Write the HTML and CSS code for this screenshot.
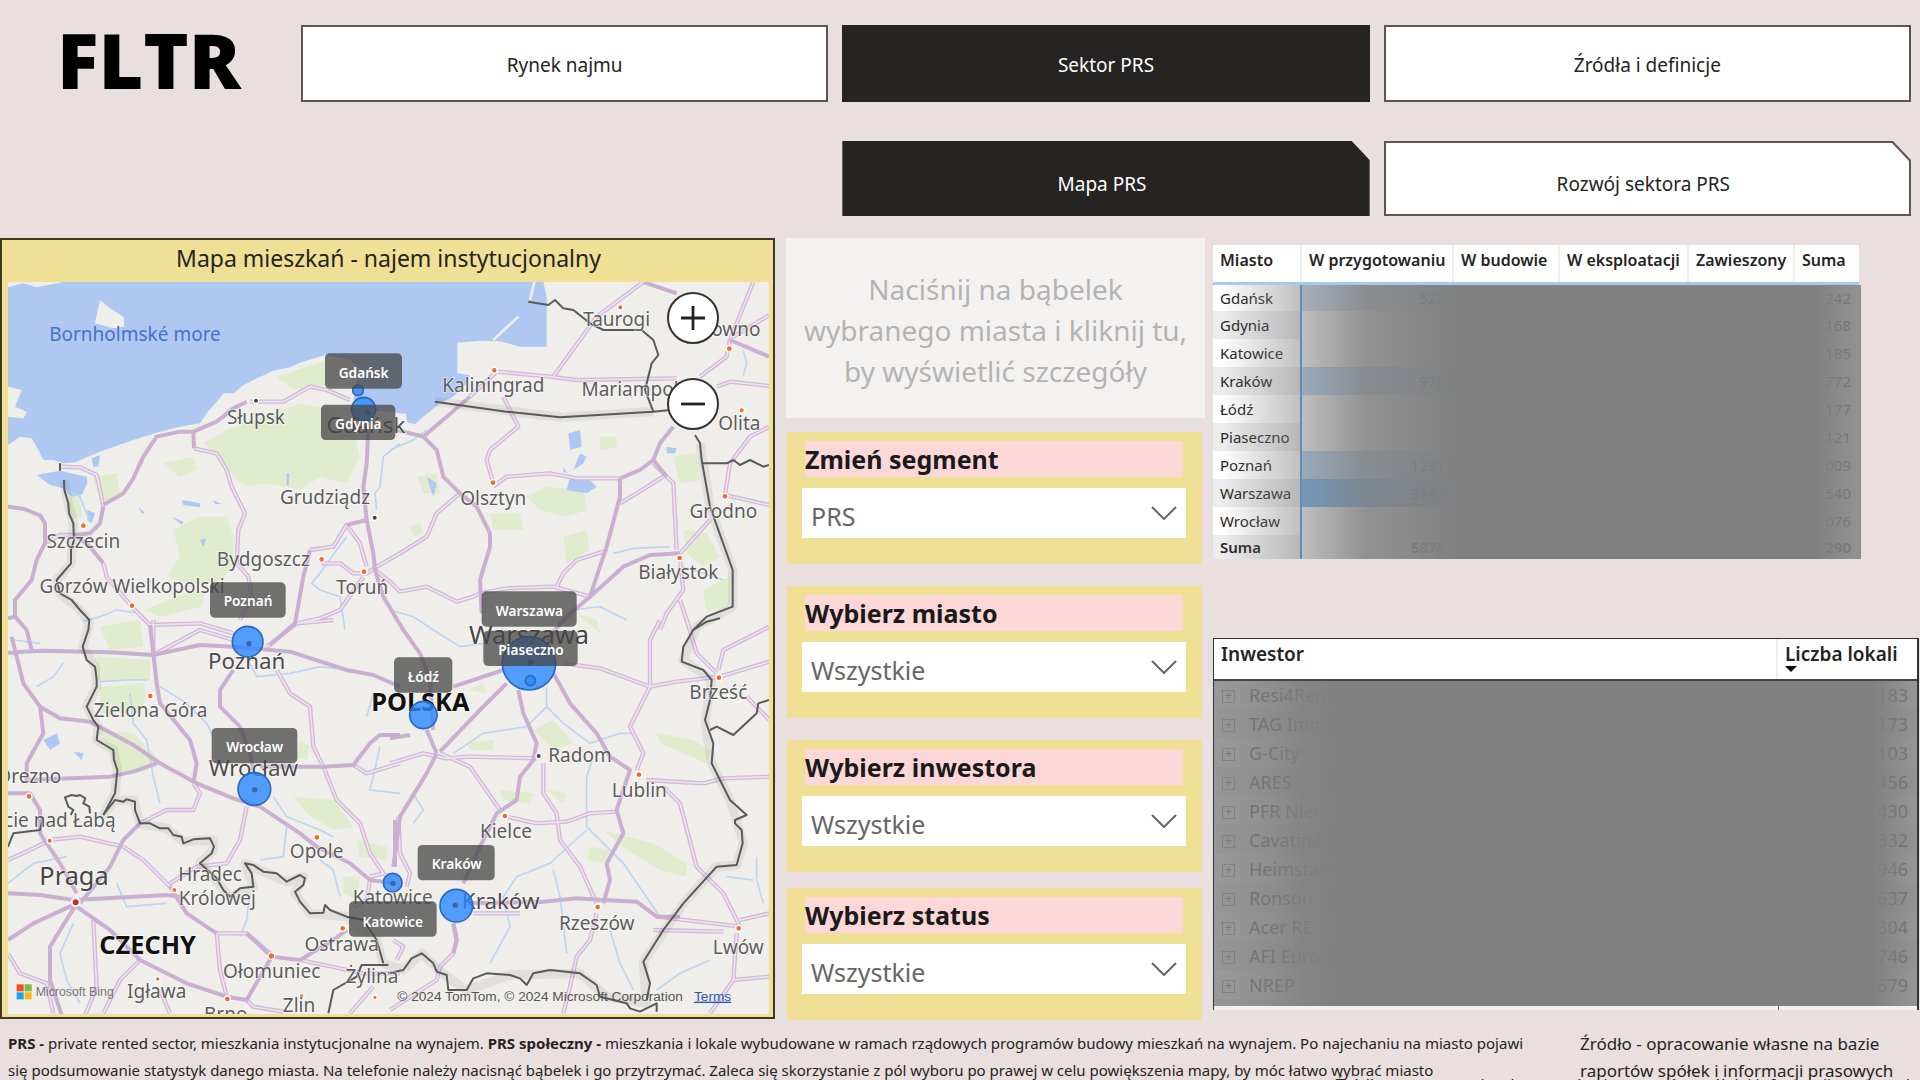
FILE: index.html
```html
<!DOCTYPE html>
<html lang="pl">

<head>
  <meta charset="utf-8">
  <title>FLTR - Mapa PRS</title>
  <link rel="stylesheet" href="styles.css">
</head>

<body>

<header class="top">
  <div class="logo">FLTR</div>
  <nav class="tabs">
    <button class="tab">Rynek najmu</button>
    <button class="tab active">Sektor PRS</button>
    <button class="tab">Źródła i definicje</button>
    <button class="tab subtab first active">Mapa PRS</button>
    <button class="tab subtab">Rozwój sektora PRS</button>
  </nav>
</header>

<main class="report">

<section class="map-panel">
  <h1>Mapa mieszkań - najem instytucjonalny</h1>
  <div class="map">
  <svg viewBox="24 156 2283 2196" role="img" aria-label="Mapa Polski">
    <defs>
      <g id="minor">
        <path d="M180 710L240 712 290 735 300 780 310 830M582 655L650 670 680 720 695 770 735 850 715 900 710 1000 745 1040 755 1100 720 1170M225 915L180 915 135 940M310 1000L320 1040 370 1100 400 1135 450 1185 600 1180 700 1210M930 960L1000 950 1040 885 1080 940 1100 1010M965 1000L1020 1000 1060 1030 1100 1030 1130 1010 1200 970 1280 920 1310 850 1380 790M1125 1020L1170 1055 1200 1085 1280 1070 1370 1115 1420 1100 1440 1090 1520 1075 1660 1070 1770 1100M1090 1040L1020 1140 960 1165 890 1180M750 515L850 515 930 470 980 480 1050 510"/>
        <g transform="translate(1170 0)">
          <path d="M320 425L480 440 560 450 860 445M490 440L620 260 760 156M1090 156L1020 330 1010 380 930 440M1030 320L1138 255M980 470L1020 455 1138 468M340 500L385 590 300 660 290 690 310 760M310 770L350 740 480 730 560 745 690 745M790 700L850 760 860 960M690 820L740 790 820 740M870 970L960 870M1138 825L1005 795 1020 700 1080 620 1138 590M870 990L880 1080 830 1150 810 1200M870 1110L900 1200M640 965L560 990 520 1030 500 1070M240 500L320 425"/>
        </g>
        <g transform="translate(0 1170)">
          <path d="M740 560L720 660 680 730 590 740 510 790M830 150L870 220 930 260 940 380 970 440 1010 540 1080 610 1110 700 1150 760M1060 435L1100 460 1200 430M800 80L890 10 1000 0M460 105L600 30 700 60M460 105V0M420 610L500 570 580 570 600 520 580 490M370 680L430 720 510 800M650 940L740 940 815 1005M650 940L660 1050 680 1130M740 1140L760 1160 850 1175M900 1020L1090 1060 1200 1060M1120 1100L1050 1180M420 1020L360 1080 310 1180M24 1000L60 1060 140 1090 160 1180M280 900L290 1100 250 1200M480 1110L510 1180M24 720L90 690 150 660 240 650 370 680M1110 780L1100 840 1060 860M1110 770L1150 760 1200 800"/>
        </g>
        <g transform="translate(1170 1170)">
          <path d="M520 130L630 145 780 200 860 185 990 170 1138 125M810 0L780 60 780 200 720 320 760 400 740 450M0 430L100 400 170 415 240 410 440 415M150 400L240 440 330 570M460 430V520L500 580 510 660 570 740 620 850M350 590L440 610 530 605 600 580 680 575M770 480L940 490 1000 475 1138 470M820 500L870 550 920 740 1000 820 1050 920M800 890L1050 920M790 930L1000 935M1050 900L1138 880M1040 940L1030 1080 960 1180M1030 1080L1138 1070M620 880L600 960 560 1010 540 1100 520 1180M190 910L200 960 190 1000 150 1040 140 1080 0 1170M25 590L30 700 60 760 50 800M890 0L920 100 980 160M985 150L1000 90 1138 20M250 880H390M10 960L40 980 20 1020M1070 230L1138 300"/>
        </g>
      </g>
    </defs>

    <rect class="land" x="24" y="156" width="2283" height="2196"/>

    <g class="forest">
      <path d="M610 640L680 600 760 570 900 520 1000 540 1060 600 1080 680 1040 760 960 740 900 780 800 760 740 770 700 740 660 680Z"/>
      <path d="M830 440L980 390 1050 390 1060 440 960 470 880 480Z"/>
      <path d="M490 700L580 680 590 720 540 740ZM280 740L350 730 360 790 310 820 290 780ZM200 800L240 800 245 860 215 870Z"/>
      <path d="M520 900L600 860 680 860 700 920 700 1000 660 1060 560 1060 500 1040 540 980ZM430 1140L560 1090 620 1080 600 1130 480 1160ZM300 1190L420 1170 430 1250 330 1260Z"/>
      <path d="M290 1280L450 1290 450 1350 290 1350ZM300 1370L430 1360 440 1400 420 1450 300 1450ZM300 1500L400 1510 480 1590 440 1620 360 1640Z"/>
      <path d="M880 1700L1000 1710 1060 1790 1000 1800 920 1750ZM1070 1830L1160 1850 1160 1890 1080 1880ZM1030 1940L1080 1940 1070 2010 1030 1990ZM900 1530L930 1550 920 1590 890 1580Z"/>
      <path d="M1580 800L1640 770 1750 780 1760 840 1700 860 1620 840ZM1470 850L1560 850 1570 900 1480 900ZM1690 920L1760 900 1770 960 1700 1000ZM1250 740L1310 730 1320 790 1270 790ZM1230 890L1260 880 1270 910 1240 920ZM1800 620L1850 620 1850 650 1800 660Z"/>
      <path d="M2020 680L2090 670 2100 750 2040 760ZM2050 900L2120 910 2160 980 2110 1010 2060 970ZM2110 1080L2190 1040 2190 1120 2120 1150Z"/>
      <path d="M1600 1500L1660 1470 1720 1540 1660 1560ZM1410 1380L1450 1360 1460 1390ZM1400 1540L1480 1530 1480 1560 1410 1560ZM1500 1680L1600 1690 1590 1720 1510 1710ZM1640 1680L1700 1690 1690 1720ZM1970 1510L2080 1530 2130 1560 2120 1600 2050 1570 1980 1540ZM1810 1800L1880 1820 1960 1840 2060 1900 2060 1940 1980 1920 1880 1860ZM1770 1850L1830 1860 1810 1900 1760 1890ZM1730 1150L1790 1170 1800 1210Z"/>
    </g>

    <g class="water">
      <path d="M24 172L70 160 110 172 190 156H1640V350L1560 350 1500 334 1440 332 1372 338 1372 430 1410 436 1400 460 1360 500 1320 520 1270 560 1245 582 1222 578 1218 552 1160 545 1100 540 1060 510 1070 450 1090 430 1050 390 975 375 900 398 870 412 820 422 760 450 730 466 700 490 672 490 650 515 620 550 600 580 540 590 480 605 400 630 300 665 225 697 190 700 160 690 130 690 110 650 95 625 60 620 24 645V560L70 565 80 545 45 530 65 480 24 470Z"/>
      <path d="M110 735L180 722 260 740 262 760 245 795 215 800 190 775 150 765ZM262 840L285 850 275 880 262 870ZM275 685L300 675 295 710 280 710Z"/>
      <path d="M545 810L600 820 600 832 550 825ZM515 860L550 875 545 885ZM640 810L665 822 645 822ZM415 830L435 850 425 850ZM860 730L868 730 866 768 860 765ZM600 930L620 925 610 950Z"/>
      <path d="M1705 610L1740 600 1745 650 1710 660ZM1740 670L1760 680 1750 700 1720 720ZM1710 740L1760 740 1790 770 1760 790 1700 780ZM1690 710L1702 730 1690 725ZM1280 740L1310 760 1300 800 1290 770ZM2000 650L2030 655 2025 670 2000 670ZM130 1530L170 1510 180 1540 150 1560ZM220 1565L250 1570 245 1590Z"/>
    </g>
    <path class="land" d="M300 210L285 280 340 295 372 290V262L330 235ZM1630 156L1640 200 1660 215 1680 156Z"/>
    <path class="spit" d="M1603 156L1590 210M1555 260L1480 330"/>

    <g class="river">
      <path d="M200 780L240 800 255 840 270 870M1200 640L1150 680 1140 770 1125 790 1130 840M1040 920L1010 960 960 1030 935 1060 960 1080 1020 1100 1035 1200M1170 660L1240 630 1280 600M250 1175L300 1160 350 1140 420 1150M300 1355L380 1350 440 1350M390 1390L400 1480 440 1530 460 1640 480 1720M480 1370L560 1420 620 1480 640 1520"/>
      <path d="M750 1300L770 1340 870 1330 960 1310 1050 1320M820 1700L860 1760 960 1800 1000 1820M860 1790L850 1880 780 1890M960 1890L1000 1920 1020 2000M24 1960L100 1900 200 1880M350 1960L380 2030 500 2020M220 2080L180 2170 200 2250 240 2320M750 1990L740 2070 720 2120M1120 1390L1100 1460M1140 1550L1110 1680 1200 1690"/>
      <path d="M1170 1140L1240 1160 1300 1200 1380 1250 1450 1240M1640 1370L1640 1430 1690 1480 1770 1540 1860 1510 1900 1510M1640 1430L1580 1490 1450 1510 1360 1570M1780 1580L1760 1640 1760 1790 1870 1900 1980 2060M1760 1800L1650 1900 1550 1940 1510 2000 1530 2090 1470 2200M1660 1920L1680 2000 1700 2170M1830 2100L1860 2200 1900 2280M1970 2280L2040 2230 2130 2190M2270 1880V1950L2290 2020M2180 1940L2260 1950M1840 970L1900 955 2010 950M2050 1010L2170 1050M2230 360L2240 400 2230 440M1720 1140L1800 1130 1880 1170M110 1370L160 1340 190 1300M1240 1690L1270 1740 1240 1780M40 1230L120 1240"/>
    </g>

    <g class="road-case"><use href="#minor"/></g>
    <g class="road-fill"><use href="#minor"/></g>

    <g class="road-major">
      <path d="M24 830L70 836 120 856 135 880V940L110 990 95 1050 45 1110V1160L24 1165M45 1160L80 1200 95 1260M310 825L370 790 400 745 430 680 470 620 540 605 580 605 650 575 700 535 740 515M580 605L582 655M310 830L300 880 270 910 225 915 270 950 310 1000M450 1185L460 1270 470 1360 480 1420 570 1530 590 1600 580 1660M1105 600L1100 700 1090 770 1100 870 1120 970 1125 1020 1150 1100 1210 1200 1260 1270 1290 1350 1300 1500M1100 870L1040 885M930 960L910 1040 885 1180 810 1245"/>
      <path d="M1190 600L1270 620 1310 660 1330 740 1380 790 1430 830 1470 910 1470 950 1440 1050 1445 1150M1270 620L1410 500M1860 745L1920 720 1960 690 1980 640 2020 590M1860 745L1860 800 1820 950 1770 1100 1700 1160 1640 1230M1770 1100L1870 1010 1950 975 2040 970M1930 156L2030 190M2190 330L2307 380M1960 690L2000 740"/>
      <g transform="translate(0 1170)">
        <path d="M24 98L120 92 330 97 460 105 600 75 700 80 870 95 1040 150 1120 165 1200 200M35 50L70 190 120 260 180 295 270 305 400 375 480 430 590 490 700 535 780 560 900 640 950 680 1050 730 1110 780 1180 790M120 260L130 340 80 430V480L330 470 400 455 470 430M24 520L90 520 120 570V640L180 730 230 820M24 960L100 910 230 850M24 820L120 825 220 840 500 825 540 830M230 850L150 980V1080L190 1200M230 860L330 930 420 1020 560 1090 680 1130 740 1140 815 1010 740 940M240 850L330 740 370 660 420 610M510 800L560 880 650 940M900 1020L1000 960 1040 930M815 1010L900 1020M700 150L660 210V260L720 320 750 400 760 450M780 440H970L1060 435 1110 370 1140 345 1200 345M1185 600V740"/>
      </g>
      <g transform="translate(1170 1170)">
        <path d="M190 200L340 150M150 395L270 270 350 190M140 400L110 460 30 590 10 740M110 330L140 400M0 355L60 345M385 210L400 280 440 370 430 420 390 470 380 540 320 580 270 680 220 790M490 160L540 250 620 340 660 410 720 450 680 570 700 640 650 730 660 780 640 850M240 850L460 845 560 835 640 840 740 845 800 890 870 890M190 910L200 960 190 1000"/>
      </g>
    </g>

    <g id="borders">
      <path class="halo" d="M192 750L205 820 220 880 213 1000 170 1050 180 1090 240 1140 268 1180 248 1250 285 1310 290 1370 260 1430 295 1490 290 1530 340 1560 352 1620 345 1690 310 1755 345 1710 400 1710 420 1780 500 1795 550 1835 640 1830 640 1860 600 1900 690 2000 760 1970 735 1900 860 1955 910 1940 885 1990 930 2050 1040 2060 1130 2130 1150 2200 1210 2220 1265 2170 1340 2240 1400 2280 1530 2235 1740 2230 1820 2300 1940 2320 1930 2195 2050 2020 2150 1910 2210 1905 2230 1840 2190 1710 2135 1600 2115 1470 2135 1350 2050 1290 2090 1190 2198 1130V1020L2130 830 2100 640M1305 515L1680 562 1960 545"/>
      <path class="border" d="M180 700V722M192 750L193 780 205 820 207 850 220 880 222 930 213 960 213 1000 170 1050 180 1090 215 1110 240 1140 268 1170 265 1200 248 1250 260 1290 285 1310 290 1350 290 1370 260 1430 280 1470 295 1490 290 1530 340 1560 342 1590 352 1620 345 1690 310 1755"/>
      <path class="border" d="M24 1850L40 1810 120 1800 130 1760M270 1750L268 1730 250 1720 256 1705 240 1695 230 1698 215 1695 195 1702 205 1730 220 1740 212 1755M310 1755L345 1710 370 1715 380 1708 405 1715 405 1740 420 1780 450 1780 480 1795 505 1795 520 1815 545 1820 550 1840 580 1828 630 1825 642 1850 635 1870 600 1900 650 1945 670 1980 690 2000 720 1975 760 1970 755 1930 735 1900 760 1905 790 1925 830 1930 860 1955 900 1935 915 1945 910 1965 885 1985 900 2015 930 2050 970 2048 975 2025 990 2040 1040 2060 1090 2070 1110 2100 1130 2130 1150 2200M985 2350L1000 2280 1070 2240 1085 2205 1165 2205"/>
      <path class="border" d="M1165 2230L1210 2220 1235 2185 1265 2170 1300 2200 1310 2225 1340 2235 1345 2280 1400 2280 1420 2245 1460 2230 1530 2235 1560 2245 1580 2265 1600 2230 1650 2220 1740 2230 1790 2265 1800 2300 1880 2320 1890 2335 1920 2345 1970 2320 1970 2345M1940 2310L1950 2260 1930 2195 1990 2100 2050 2020 2150 1910 2210 1905 2228 1840 2225 1800 2205 1780 2205 1770 2240 1755 2190 1710 2175 1680 2135 1600 2140 1540 2115 1470 2130 1410 2135 1350 2110 1320 2045 1295 2050 1250 2080 1200 2120 1175 2160 1165"/>
      <path class="border" d="M2080 1200L2120 1160 2198 1130V1020L2130 830 2105 690 2100 640 2085 615M2105 700L2180 700 2200 690 2220 705 2250 690 2290 710 2307 705M1305 515L1520 545 1680 562 1960 545 2010 540M1960 545L1935 480 1955 400 1975 375 1960 330 1925 300 1810 300 1770 280 1720 240 1690 235 1665 210 1645 225 1585 215M2130 1500L2150 1490 2200 1515 2270 1450 2275 1420 2307 1410"/>
    </g>

    <g class="dots">
      <circle cx="250" cy="887" r="9"/><circle cx="396" cy="1127" r="9"/><circle cx="965" cy="988" r="9"/><circle cx="1092" cy="1025" r="9"/>
      <circle cx="1861" cy="232" r="8"/><circle cx="1483" cy="421" r="9"/><circle cx="2188" cy="356" r="9"/><circle cx="2225" cy="541" r="8"/>
      <circle cx="1479" cy="758" r="9"/><circle cx="2175" cy="799" r="9"/><circle cx="2039" cy="984" r="9"/>
      <circle cx="451" cy="1398" r="9"/><circle cx="87" cy="1699" r="9"/><circle cx="149" cy="1832" r="8"/><circle cx="523" cy="1980" r="8"/>
      <circle cx="951" cy="1822" r="9"/><circle cx="814" cy="2178" r="10"/><circle cx="1028" cy="2095" r="9"/><circle cx="473" cy="2247" r="7"/>
      <circle cx="682" cy="2307" r="9"/><circle cx="905" cy="2298" r="7"/><circle cx="1125" cy="2302" r="7"/>
      <circle cx="2157" cy="1343" r="9"/><circle cx="1917" cy="1634" r="9"/><circle cx="1515" cy="1758" r="9"/><circle cx="1793" cy="2031" r="9"/><circle cx="2216" cy="2095" r="9"/>
      <circle class="capital" cx="227" cy="2017" r="12"/>
      <circle class="small" cx="768" cy="512" r="8"/><circle class="small" cx="1124" cy="863" r="8"/><circle class="small" cx="1616" cy="1578" r="8"/>
    </g>

    <g class="city">
      <text class="sea" x="405" y="332">Bornholmské more</text>
      <text x="768" y="583">Słupsk</text>
      <text x="1098" y="608" class="big">Gdańsk</text>
      <text x="975" y="823">Grudziądz</text>
      <text x="250" y="955">Szczecin</text>
      <text x="790" y="1007">Bydgoszcz</text>
      <text x="396" y="1088">Gorzów Wielkopolski</text>
      <text x="1087" y="1092">Toruń</text>
      <text x="1850" y="287">Taurogi</text>
      <text x="2190" y="318">Kowno</text>
      <text x="1480" y="485">Kaliningrad</text>
      <text x="1890" y="498">Mariampol</text>
      <text x="2218" y="600">Olita</text>
      <text x="1480" y="825">Olsztyn</text>
      <text x="2170" y="865">Grodno</text>
      <text x="2035" y="1047">Białystok</text>
      <text x="740" y="1316" class="big">Poznań</text>
      <text x="452" y="1461">Zielona Góra</text>
      <text x="760" y="1638" class="big">Wrocław</text>
      <text x="88" y="1660">Drezno</text>
      <text x="145" y="1790">Uście nad Łabą</text>
      <text x="222" y="1964" class="metro">Praga</text>
      <text x="950" y="1883">Opole</text>
      <text x="630" y="1954">Hradec</text>
      <text x="652" y="2024">Królowej</text>
      <text x="1178" y="2023">Katowice</text>
      <text x="1025" y="2163">Ostrawa</text>
      <text x="815" y="2245">Ołomuniec</text>
      <text x="1116" y="2258">Żylina</text>
      <text x="470" y="2305">Igława</text>
      <text x="897" y="2347">Zlin</text>
      <text x="677" y="2372">Brno</text>
      <text x="1587" y="1242" class="metro">Warszawa</text>
      <text x="1740" y="1597">Radom</text>
      <text x="2155" y="1407">Brześć</text>
      <text x="1918" y="1700">Lublin</text>
      <text x="1518" y="1823">Kielce</text>
      <text x="1502" y="2036" class="big">Kraków</text>
      <text x="1790" y="2100">Rzeszów</text>
      <text x="2215" y="2172">Lwów</text>
      <text x="443" y="2172" class="country">CZECHY</text>
      <text x="1261" y="1442" class="country">POLSKA</text>
    </g>

    <g class="bubbles">
      <circle cx="1074" cy="481" r="16"/>
      <circle cx="1091" cy="538" r="36"/>
      <circle cx="743" cy="1235" r="46"/>
      <circle cx="1587" cy="1300" r="80"/>
      <circle cx="1591" cy="1352" r="15"/>
      <circle cx="1270" cy="1455" r="41"/>
      <circle cx="763" cy="1677" r="49"/>
      <circle cx="1178" cy="1958" r="28"/>
      <circle cx="1369" cy="2027" r="49"/>
    </g>
    <g class="bubble-dots">
      <circle cx="1103" cy="548" r="8"/><circle cx="747" cy="1241" r="8"/><circle cx="1592" cy="1298" r="9"/>
      <circle cx="764" cy="1679" r="8"/><circle cx="1179" cy="1960" r="8"/><circle cx="1366" cy="2026" r="8"/>
    </g>

    <g class="tags">
      <rect x="975" y="370" width="231" height="106" rx="14"/><text x="1091" y="443">Gdańsk</text>
      <rect x="963" y="524" width="223" height="106" rx="14"/><text x="1075" y="596">Gdynia</text>
      <rect x="630" y="1057" width="227" height="106" rx="14"/><text x="744" y="1129">Poznań</text>
      <rect x="1445" y="1084" width="285" height="106" rx="14"/><text x="1588" y="1157">Warszawa</text>
      <rect x="1450" y="1202" width="283" height="106" rx="14"/><text x="1593" y="1274">Piaseczno</text>
      <rect x="1182" y="1282" width="175" height="106" rx="14"/><text x="1270" y="1355">Łódź</text>
      <rect x="635" y="1494" width="257" height="106" rx="14"/><text x="764" y="1567">Wrocław</text>
      <rect x="1253" y="1845" width="231" height="106" rx="14"/><text x="1370" y="1918">Kraków</text>
      <rect x="1047" y="2014" width="263" height="106" rx="14"/><text x="1178" y="2090">Katowice</text>
    </g>

    <g class="credits">
      <rect x="50" y="2263" width="21" height="21" fill="#f05023"/>
      <rect x="74" y="2263" width="21" height="21" fill="#7fba42"/>
      <rect x="50" y="2287" width="21" height="21" fill="#1ba4e8"/>
      <rect x="74" y="2287" width="21" height="21" fill="#fdb913"/>
      <text x="107" y="2299" class="bing">Microsoft Bing</text>
      <text x="1192" y="2312">© 2024 TomTom, © 2024 Microsoft Corporation</text>
      <a href="#terms"><text x="2082" y="2312" class="terms">Terms</text></a>
    </g>
  </svg>
  <div class="zoom">
    <button aria-label="Powiększ"><svg viewBox="0 0 52 52"><path d="M13 26H39M26 13V39"/></svg></button>
    <button aria-label="Pomniejsz"><svg viewBox="0 0 52 52"><path d="M13 26H39"/></svg></button>
  </div>
  </div>
</section>

<section class="filters">
  <button class="details" disabled>Naciśnij na bąbelek wybranego miasta i kliknij tu, by wyświetlić szczegóły</button>

  <div class="slicer">
    <label for="segment">Zmień segment</label>
    <div class="select">
      <select id="segment"><option>PRS</option></select>
      <svg viewBox="0 0 26 14"><path d="M1 1L13 13 25 1"/></svg>
    </div>
  </div>
  <div class="slicer">
    <label for="miasto">Wybierz miasto</label>
    <div class="select">
      <select id="miasto"><option>Wszystkie</option></select>
      <svg viewBox="0 0 26 14"><path d="M1 1L13 13 25 1"/></svg>
    </div>
  </div>
  <div class="slicer">
    <label for="inwestor">Wybierz inwestora</label>
    <div class="select">
      <select id="inwestor"><option>Wszystkie</option></select>
      <svg viewBox="0 0 26 14"><path d="M1 1L13 13 25 1"/></svg>
    </div>
  </div>
  <div class="slicer">
    <label for="status">Wybierz status</label>
    <div class="select">
      <select id="status"><option>Wszystkie</option></select>
      <svg viewBox="0 0 26 14"><path d="M1 1L13 13 25 1"/></svg>
    </div>
  </div>
</section>

<section class="tables">
  <div class="cities">
    <table>
      <colgroup><col class="c-city"><col class="c-prep"><col class="c-build"><col class="c-use"><col class="c-stop"><col></colgroup>
      <thead>
        <tr><th>Miasto</th><th>W przygotowaniu</th><th>W budowie</th><th>W eksploatacji</th><th>Zawieszony</th><th>Suma</th></tr>
      </thead>
      <tbody>
        <tr><td>Gdańsk</td><td class="low">522</td><td></td><td></td><td></td><td>242</td></tr>
        <tr><td>Gdynia</td><td></td><td></td><td></td><td></td><td>168</td></tr>
        <tr><td>Katowice</td><td></td><td></td><td></td><td></td><td>185</td></tr>
        <tr><td>Kraków</td><td class="mid">976</td><td></td><td></td><td></td><td>772</td></tr>
        <tr><td>Łódź</td><td></td><td></td><td></td><td></td><td>177</td></tr>
        <tr><td>Piaseczno</td><td></td><td></td><td></td><td></td><td>121</td></tr>
        <tr><td>Poznań</td><td class="mid">1231</td><td></td><td></td><td></td><td>009</td></tr>
        <tr><td>Warszawa</td><td class="high">3147</td><td></td><td></td><td></td><td>540</td></tr>
        <tr><td>Wrocław</td><td></td><td></td><td></td><td></td><td>076</td></tr>
        <tr class="total"><td>Suma</td><td>5878</td><td></td><td></td><td></td><td>290</td></tr>
      </tbody>
    </table>
    <div class="cover"></div>
  </div>

  <div class="investors">
    <table>
      <colgroup><col><col class="c-count"></colgroup>
      <thead>
        <tr><th>Inwestor</th><th>Liczba lokali<svg class="sort" viewBox="0 0 12 6"><path d="M0 0H12L6 6Z"/></svg></th></tr>
      </thead>
      <tbody>
        <tr><td><i>+</i>Resi4Rent</td><td>183</td></tr>
        <tr><td><i>+</i>TAG Immo</td><td>173</td></tr>
        <tr><td><i>+</i>G-City</td><td>103</td></tr>
        <tr><td><i>+</i>ARES</td><td>456</td></tr>
        <tr><td><i>+</i>PFR Nier</td><td>430</td></tr>
        <tr><td><i>+</i>Cavatina</td><td>332</td></tr>
        <tr><td><i>+</i>Heimstad</td><td>946</td></tr>
        <tr><td><i>+</i>Ronson</td><td>637</td></tr>
        <tr><td><i>+</i>Acer RE</td><td>304</td></tr>
        <tr><td><i>+</i>AFI Euro</td><td>746</td></tr>
        <tr><td><i>+</i>NREP</td><td>679</td></tr>
      </tbody>
    </table>
    <div class="cover"></div>
    <div class="more"></div>
  </div>
</section>

</main>

<footer class="notes">
  <p class="info"><b>PRS -</b> private rented sector, mieszkania instytucjonalne na wynajem. <b>PRS społeczny -</b> mieszkania i lokale wybudowane w ramach rządowych programów budowy mieszkań na wynajem. Po najechaniu na miasto pojawi<br>
  się podsumowanie statystyk danego miasta. Na telefonie należy nacisnąć bąbelek i go przytrzymać. Zaleca się skorzystanie z pól wyboru po prawej w celu powiększenia mapy, by móc łatwo wybrać miasto</p>
  <p class="source">Źródło - opracowanie własne na bazie<br>raportów spółek i informacji prasowych</p>
  <p class="source-under">Źródło - opracowanie własne na bazie raportów spółek i informacji prasowych</p>
</footer>

</body>
</html>
```
FILE: styles.css
```css
* { box-sizing: border-box }
body { background: #e8dfde; color: #252423; font-family: "Noto Sans", "Open Sans", sans-serif; font-size: 16px; height: 100vh; margin: 0; overflow: hidden }
button, select { font-family: inherit }
h1, p { margin: 0 }

/* Header */

.top { display: flex; padding: 25px 9px 22px 0 }
.logo { color: #000; flex: 0 0 301px; font-family: "Open Sans", "Noto Sans", sans-serif; font-size: 77px; font-weight: 800; line-height: 70px; padding-left: 57px }
.tabs { display: grid; flex: 1; gap: 39px 14px; grid-template-columns: repeat(3, 1fr); grid-template-rows: 77px 75px }
.tab { background: #fff; border: 2px solid #5c5654; color: #252423; font-size: 19px; padding: 2px 0 0 }
.tab.active { background: #252423; border-color: #252423; color: #fff }
.subtab { background: #5c5654; border: 0; clip-path: polygon(0 0, calc(100% - 18px) 0, 100% 19px, 100% 100%, 0 100%); isolation: isolate; padding: 10px 8px 0 0; position: relative }
.subtab::before { background: #fff; clip-path: polygon(0 0, calc(100% - 17px) 0, 100% 18px, 100% 100%, 0 100%); content: ""; inset: 2px; position: absolute; z-index: -1 }
.subtab.active::before { background: #252423 }
.subtab.first { grid-column: 2 }

.report { display: grid; gap: 8px; grid-template-columns: 778fr 419fr 706fr; padding-right: 1px }

/* Map */

.map-panel { align-self: start; background: #efe096; border: 2px solid #3f3826; margin-right: 3px; padding: 0 4px 3px 6px }
.map-panel h1 { font-size: 23px; font-weight: normal; line-height: 36px; padding-bottom: 6px; text-align: center }
.map { position: relative }
.map > svg { display: block; width: 100% }
.land { fill: #f0eeeb }
.forest { fill: #dcebc3; opacity: 0.75 }
.water { fill: #aec8f2 }
.spit { fill: none; stroke: #f0eeeb; stroke-width: 8px }
.river { fill: none; stroke: #bdd5ee; stroke-width: 5px }
.road-case, .road-fill, .road-major, .border, .halo { fill: none; stroke-linejoin: round }
.road-case { stroke: #d3b9d8; stroke-width: 13px }
.road-fill { stroke: #eee3ef; stroke-width: 5px }
.road-major { stroke: #cab0d0; stroke-width: 12px }
.border { stroke: #5a5a5a; stroke-width: 6px }
.halo { opacity: 0.08; stroke: #333; stroke-width: 28px }
.dots { fill: #f26a30; stroke: #fff; stroke-width: 4px }
.dots .capital { fill: #cf2a20; stroke-width: 6px }
.dots .small { fill: #444 }
.city { fill: #5c5c5c; font-size: 57px; paint-order: stroke; stroke: rgba(255, 255, 255, 0.6); stroke-width: 5px; text-anchor: middle }
.city .big { fill: #4c4c4c; font-size: 67px }
.city .metro { fill: #444; font-size: 76px }
.city .sea { fill: #4a6fcb; stroke: none }
.city .country { fill: #111; font-size: 76px; font-weight: bold }
.bubbles { fill: rgba(42, 136, 255, 0.8); stroke: #2a69bb; stroke-width: 5px }
.bubble-dots { fill: #3767a4 }
.tags rect { fill: rgba(70, 70, 70, 0.75) }
.tags text { fill: #fff; font-size: 41px; font-weight: 600; text-anchor: middle }
.credits { fill: #555; font-family: "Liberation Sans", sans-serif; font-size: 41px }
.credits .bing { fill: #777; font-size: 37px }
.credits .terms { fill: #2b55b5; text-decoration: underline }

.zoom { display: grid; gap: 34px; position: absolute; right: 50px; top: 10px }
.zoom button { background: #fff; border: 2px solid #333; border-radius: 50%; height: 52px; padding: 0; width: 52px }
.zoom svg { display: block; fill: none; stroke: #222; stroke-width: 3px }

/* Filters */

.filters { display: flex; flex-direction: column }
.details { background: #f3f2f1; border: 0; color: #b5b3b1; font-size: 28px; height: 180px; line-height: 41px; padding: 4px 12px 0 }
.slicer { background: #efe096; height: 132px; margin: 22px 3px 0 1px; padding: 9px 16px 0 15px }
.details + .slicer { margin-top: 14px }
.slicer:last-child { margin-top: 16px }
.slicer label { background: #fbd7d7; color: #1a1a1a; display: block; font-size: 25px; font-weight: 700; height: 36px; line-height: 36px; margin: 0 3px 11px }
.select { position: relative }
.select select { appearance: none; background: #fff; border: 0; border-radius: 0; color: #666; font-size: 25px; height: 50px; padding: 6px 9px 0; width: 100% }
.select svg { fill: none; height: 14px; pointer-events: none; position: absolute; right: 9px; stroke: #666; stroke-width: 2px; top: 18px; width: 26px }

/* Tables */

table { border-collapse: collapse; table-layout: fixed; width: 100% }
th, td { overflow: hidden; padding: 0; white-space: nowrap }
.cover { bottom: 0; left: 0; position: absolute; right: 0 }

.cities { margin-top: 7px; max-width: 646px; position: relative }
.c-city { width: 88px }
.c-prep { width: 152px }
.c-build { width: 106px }
.c-use { width: 129px }
.c-stop { width: 106px }
.cities th { background: #fff; border-bottom: 3px solid #a3cbf0; border-left: 2px solid #f0eeee; font-size: 16px; font-weight: 600; height: 38px; padding: 0 0 6px 7px; text-align: left }
.cities th:first-child, .investors th:first-child { border-left: 0 }
.cities td { background: #fff; font-size: 15px; height: 28px; padding-right: 8px; text-align: right }
.cities td:first-child { border-right: 2px solid #4f97dd; padding-left: 7px; text-align: left }
.cities tr:nth-child(even) td:first-child { background: #ededed }
.cities .total td { font-weight: 600; height: 24px }
.cities .low { background: #cde3fa }
.cities tr .mid { background: #b3d5f8 }
.cities tr .high { background: #66aef5 }
.cities .cover { background: linear-gradient(90deg, rgba(128, 128, 128, 0) 8px, rgba(128, 128, 128, 0.5) 88px, rgba(128, 128, 128, 0.85) 150px, #808080 245px, #808080 600px, rgba(128, 128, 128, 0.85) 648px); right: -2px; top: 40px }

.investors { border: 1px solid #333; border-bottom: 0; border-right-width: 2px; margin-top: 79px; position: relative }
.c-count { width: 140px }
.investors th { background: #fff; border-bottom: 2px solid #444; font-size: 19px; font-weight: 600; height: 41px; line-height: 24px; padding: 3px 7px 0; text-align: left; vertical-align: top }
.investors th + th { border-left: 2px solid #eee; padding-right: 0 }
.sort { display: block; height: 6px; width: 12px }
.investors td { background: #fff; font-size: 18px; height: 29px; padding-left: 8px }
.investors tr:nth-child(even) td { background: #ededed }
.investors td + td { padding-right: 9px; text-align: right }
.investors i { border: 1px solid #888; color: #555; display: inline-block; font-size: 12px; font-style: normal; height: 13px; line-height: 10px; margin-right: 14px; text-align: center; vertical-align: 2px; width: 13px }
.investors .cover { background: linear-gradient(90deg, rgba(128, 128, 128, 0.8) 0, rgba(128, 128, 128, 0.87) 50px, rgba(128, 128, 128, 0.96) 90px, #808080 125px, #808080 calc(100% - 45px), rgba(128, 128, 128, 0.82) 100%); bottom: 4px; top: 42px }
.more { background: #f3f0f0; border-right: 1px solid #666; height: 11px; margin-right: 138px }
.more::after { background: #f3f0f0; content: ""; display: block; height: 11px; margin: 0 -139px 0 auto; width: 138px }

/* Footer */

.notes { align-items: flex-start; display: flex; justify-content: space-between; padding: 10px 20px 0 8px; position: relative; white-space: nowrap }
.info { font-size: 15px; line-height: 27px }
.source { font-size: 17px; line-height: 27px; width: 320px }
.source-under { left: 1335px; position: absolute; top: 54px }
```
